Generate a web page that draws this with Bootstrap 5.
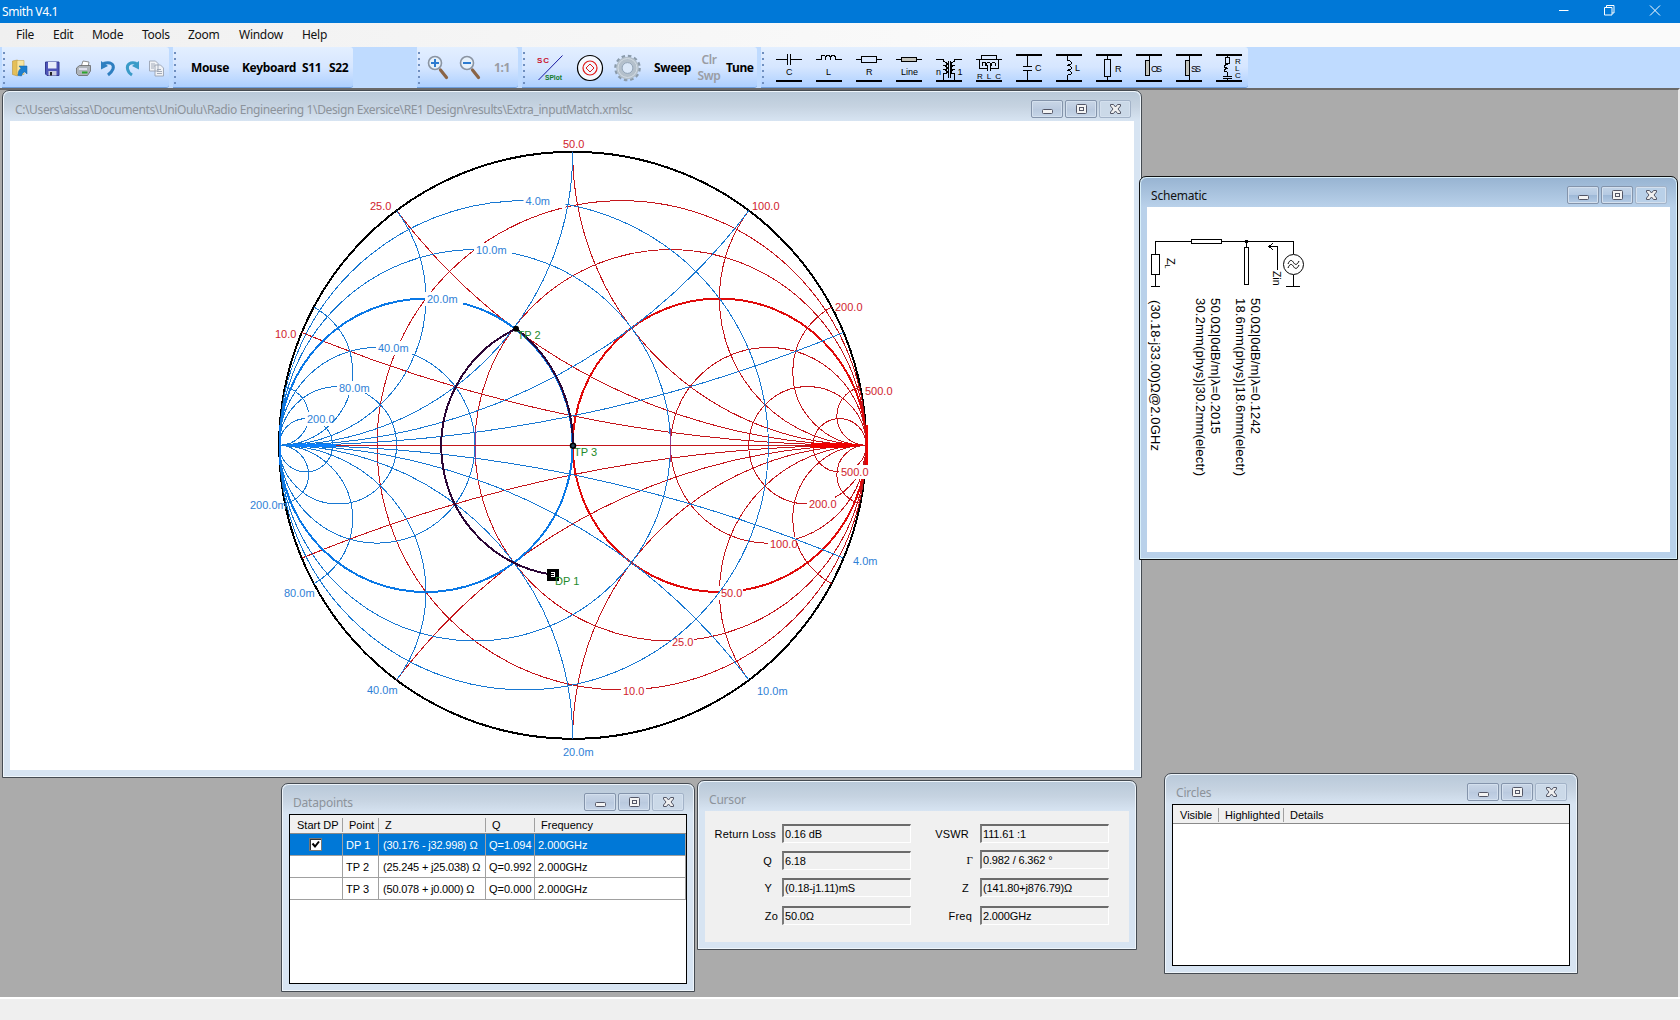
<!DOCTYPE html>
<html lang="en">
<head>
<meta charset="utf-8">
<title>Smith V4.1</title>
<link href="https://cdn.jsdelivr.net/npm/bootstrap@5.3.0/dist/css/bootstrap.min.css" rel="stylesheet">
<style>
:root{--ui:"Noto Sans","Open Sans",sans-serif;--ar:"Liberation Sans",Arial,sans-serif}
body{font-family:var(--ui);font-size:12px;line-height:16px;color:#000;width:1680px;height:1020px;overflow:hidden;background:#efefef}
svg{display:block;flex:none}
.app-title{height:23px;background:#0078d7;color:#fff;padding-left:2px}
.app-title .caption{font-size:12px;letter-spacing:-.4px}
.app-menu{height:24px;background:linear-gradient(90deg,#f0f0f0,#fafafa 60%);padding-left:16px}
.app-menu a{color:#111;text-decoration:none;letter-spacing:-.28px;white-space:nowrap}
.tools{height:41px;background:#bfdbff;padding-left:2px}
.strip{height:41px;padding-top:2px;background:linear-gradient(#e3efff,#d6e6ff 50%,#add0ff);border-bottom:1px solid #6f9fdc;border-radius:0 3px 3px 0;position:relative}
.strip::before{content:"";width:2px;height:33px;margin-left:1px;flex:none;background:repeating-linear-gradient(#6f8fc0 0 2px,transparent 2px 6px)}
.strip b{font-weight:700;letter-spacing:-.35px;white-space:nowrap;line-height:16px}
.dim{color:#9a9ca3}
.desk{height:909px;background:#ababab;border-top:2px solid #696969;border-right:2px solid #e8e8e8;position:relative}
.status-line{height:2px;background:#fff}
.mdi{position:absolute;border:1px solid #454b52;border-radius:7px 7px 0 0;background:#d7e4f2;box-shadow:inset 0 0 0 1px #eef5fb;padding:0 7px 7px}
.mdi .bar{height:29px;margin:1px -6px 0;padding:8px 9px 0 5px;background:linear-gradient(#b9c9d9,#c6d3e1 50%,#d7e4f2);border-radius:6px 6px 0 0}
.mdi .bar span{color:#8c939b;letter-spacing:-.2px;line-height:18px;white-space:nowrap;padding-top:1px}
.mdi.active{background:#b9d1ea;border-color:#111;box-shadow:inset 0 0 0 1px #d9f0fa}
.mdi.active .bar{background:linear-gradient(#98b4d2,#b9d1ea);padding-right:8px}
.mdi.active .bar span{color:#111}
.wb{width:32px;height:18px;border:1px solid #8494ab;border-radius:2px;background:linear-gradient(#c9d6e6,#bccbe0 50%,#b9c9de 50%,#c6d5e8);box-shadow:inset 0 0 0 1px #d4e0ee;padding:0;display:flex;align-items:center;justify-content:center}
.wb:last-child{border-color:#a3b3c8;background:#cbd9e8}
.active .wb{background:linear-gradient(#c3d4e8,#b4c9e2 50%,#9db8d6 50%,#b5cce6)}
.active .wb:last-child{background:#b9d0e8}
.pane{background:#fff;flex:1;min-height:0}
.boxed{border:1px solid #000}
.grid{font-family:var(--ar);font-size:11px;line-height:14px}
.grid th,.grid td{font-weight:400;padding:0;white-space:nowrap;border-right:1px solid #a0a0a0;border-bottom:1px solid #a0a0a0}
.grid th{background:#f0f0f0;height:19px;padding:2px 0 0 6px;border-right:0;border-bottom-color:#8a8a8a;position:relative}
.grid th:first-child{padding-left:7px}
.grid th+th::before{content:"";position:absolute;left:-1px;top:3px;bottom:1px;width:1px;background:#a0a0a0}
.grid td{height:22px;padding-left:3px}
.grid td:nth-child(3){padding-left:4px;letter-spacing:-.18px}
.grid .sel td{background:#0078d7;color:#fff}
.tick{width:13px;height:13px;background:#fff;border:1px solid #777;box-shadow:inset 1px 1px 0 #333;margin-left:16px}
.form-lines{background:#f0f0f0;font-family:var(--ar);font-size:11px;line-height:14px}
.fld{height:19px;border:1px solid #fff;border-top:2px solid #6b6b6b;border-left:2px solid #7a7a7a;width:129px;margin-right:1px;padding:1px 0 0 1px;font-size:11px;line-height:15px;letter-spacing:-.15px}
.lb{letter-spacing:.2px;text-align:right}
text{font-family:var(--ar)}
.chart text{font-size:11px}
</style>
</head>
<body>
<header class="app-title d-flex align-items-center justify-content-between">
  <span class="caption">Smith V4.1</span>
  <svg width="121" height="23" fill="none" stroke="#fff"><path d="M0 10.500h9.500M45.500 7.500h7.500v7.500h-7.500zM47.500 7V5.500h7.500v7.500h-2M91 5.500l10 10M101 5.500l-10 10"/></svg>
</header>
<nav class="app-menu d-flex align-items-center">
  <a href="#" style="width:37px">File</a><a href="#" style="width:39px">Edit</a><a href="#" style="width:50px">Mode</a><a href="#" style="width:46px">Tools</a><a href="#" style="width:51px">Zoom</a><a href="#" style="width:63px">Window</a><a href="#">Help</a>
</nav>
<section class="tools d-flex">
  <div class="strip d-flex align-items-center me-1" style="width:167px">
    <svg width="160" height="40" viewBox="5 47 160 40">
      <path d="M12.500 60l5-1v16l-5-1.500z" fill="#e5bf58" stroke="#b8923a" stroke-width=".6"/><path d="M17 59.500h7v14h-7z" fill="#f8e4a0" stroke="#c8a850" stroke-width=".6"/>
      <path d="M18 74.500c0-4 1-6 3-7l-2-2.500h8v8l-2.300-2.300c-1.700 1-2.700 2-3.200 4.300z" fill="#1c7fd0" stroke="#1460a0" stroke-width=".5"/>
      <path d="M45.500 61h13.500v13.500h-12l-1.500-1.500z" fill="#4f55b8" stroke="#343a90"/><path d="M48 61h8.500v6.500H48z" fill="#e8ecfa"/><path d="M48.500 70h8v4.500h-8z" fill="#c8cce0"/><path d="M50 71h2v3.500h-2z" fill="#222"/>
      <path d="M81 66l2-6 6 1-1 5z" fill="#fff" stroke="#777" stroke-width=".8"/><path d="M76.500 67l3-2.500h11V70l-3 4.500h-9l-2-2z" fill="#aeb4ba" stroke="#666" stroke-width=".8"/><path d="M79 68h8" stroke="#eef" stroke-width="1.500"/><path d="M82 71.500h5.500" stroke="#2ca52c" stroke-width="2"/>
      <path d="M103.500 62.500c7-2.500 11 1 9.500 5.500-.7 2-2.500 4-5 6" fill="none" stroke="#2f7fc0" stroke-width="3"/><path d="M101 60v8.500l7-3.500z" fill="#2f7fc0"/>
      <path d="M136.500 62.500c-6-2-10 1-9 5.500.5 2.500 2 4.500 4.500 6" fill="none" stroke="#3a9bc8" stroke-width="3"/><path d="M139 60v8.500l-7-3.500z" fill="#3a9bc8"/>
      <g fill="#f0f2f6" stroke="#9aa3b2" stroke-width=".9"><path d="M149.500 60h6l2.500 2.500V70h-8.500zM155 64h5.500l3 3v8H155z"/><path d="M151 63h4M151 65h4M151 67h3M157 68.500h4M157 70.500h5M157 72.500h5"/></g>
    </svg>
  </div>
  <div class="strip d-flex align-items-center" style="width:180px">
    <b style="margin-left:15px;width:51px">Mouse</b><b style="width:60px">Keyboard</b><b style="width:27px">S11</b><b>S22</b>
  </div>
  <div style="width:64px"></div>
  <div class="strip d-flex align-items-center me-1" style="width:101px">
    <svg width="62" height="40" viewBox="420 47 62 40">
      <g fill="#e6f1fb" stroke="#8a94a2" stroke-width="1.600"><circle cx="435" cy="62" r="6.500"/><circle cx="467" cy="62" r="6.500"/></g>
      <g stroke="#2c7bd0" stroke-width="2"><path d="M431 62h8M435 58v8M463 62h8"/></g>
      <g stroke="#8a6446" stroke-width="3.200" stroke-linecap="round"><path d="M440.500 69l6 7.500M472.500 69l6 7.500"/></g>
    </svg>
    <b class="dim" style="margin-left:12px">1:1</b>
  </div>
  <div class="strip d-flex align-items-center me-1" style="width:235px">
    <svg width="119" height="40" viewBox="525 47 119 40">
      <path d="M538.500 79l24-24.500" stroke="#1818a0"/><text x="537" y="62" font-size="8" font-weight="700" fill="#c8102c" textLength="12">SC</text><text x="545" y="79" font-size="8" font-weight="700" fill="#107a28" textLength="17" lengthAdjust="spacingAndGlyphs">SPlot</text>
      <circle cx="590" cy="67" r="12.500" fill="#f4f8ff" stroke="#000" stroke-width="1.200"/><circle cx="590" cy="67" r="7" fill="none" stroke="#e01818" stroke-width="1.200"/><path d="M590 63l4 4-4 4-4-4z" fill="none" stroke="#e01818"/>
      <circle cx="627.500" cy="67" r="11.800" fill="none" stroke="#8b9bab" stroke-width="3" stroke-dasharray="3.400 2.780"/><circle cx="627.500" cy="67" r="8.500" fill="none" stroke="#b4c0cb" stroke-width="5.500"/><circle cx="627.500" cy="67" r="5.400" fill="#dbe8f8" stroke="#7e8fa0" stroke-width=".8"/><circle cx="627.500" cy="67" r="9.500" fill="none" stroke="#d3dce4"/>
    </svg>
    <b style="margin-left:10px;width:43px">Sweep</b><b class="dim text-center" style="width:24px;font-weight:600">Clr<br>Swp</b><b style="margin-left:5px">Tune</b>
  </div>
  <div class="strip d-flex align-items-center" style="width:487px">
    <svg style="margin-left:1px" width="480" height="40" viewBox="765 47 480 40">
      <g fill="none" stroke="#000" shape-rendering="crispEdges">
      <path stroke-width="2" d="M776 80h26M816 80h26M856 80h26M896 80h26M936 80h26M976 80h26M1016 80h26M1056 80h26M1096 80h26M1136 80h26M1176 80h26M1216 80h26M1016 54h26M1056 54h26M1096 54h26M1136 54h26M1176 54h26M1216 54h26"/>
      <path d="M776 58.500h11M791 58.500h11M787.500 53v11M790.500 53v11M816 58.500h5c0-6 4.500-6 4.500 0c0-6 5-6 5 0c0-6 5-6 5 0h6M856 58.500h5M876 58.500h6M861.500 55.500h15v6h-15z"/>
      <path d="M896 58.500h5M917 58.500h5M1149.500 55v4M1189.500 55v25"/><path fill="#c4c4bc" d="M901.500 56.500h15v4h-15zM1145.500 59.500h4v15h-4zM1185.500 59.500h4v15h-4z"/>
      <path d="M936 58.500h7.500v2c5 1 5 4 0 4c5 1 5 4 0 4c5 1 5 4 0 4v7M962 58.500h-7.500v2c-5 1-5 4 0 4c-5 1-5 4 0 4c-5 1-5 4 0 4v7M948.500 60v17M950.500 60v17"/>
      <path d="M976 58.500h3M999 58.500h3M981.500 54.500h15v4h-15zM979.500 58v9h8M998.500 58v9h-8M979 58.500h2M997 58.500h2M982 65c0-5 4-5 4 0c0-5 5-5 5 0c0-5 5-5 5 0M987.500 64v6M990.500 64v6"/>
      <path d="M1027.500 55v11M1027.500 69v11M1023 65.500h9M1023 69.500h9M1067.500 55v4c5 1 5 5 0 5c5 1 5 5 0 5c5 1 5 5 0 5v6M1107.500 55v3M1107.500 75v5M1104.500 58.500h6v17h-6zM1227.500 55v2M1225.500 56.500h4v6h-4zM1227.500 63c-4 1-4 4 0 4c-4 1-4 4 0 4v4M1223 75.500h9M1223 77.500h9M1227.500 78v2"/>
      </g>
      <g font-size="9"><text x="786" y="74">C</text><text x="826" y="74">L</text><text x="866" y="74">R</text><text x="901" y="74" textLength="17">Line</text><text x="936" y="74">n</text><text x="957.500" y="74">1</text><text x="977" y="78" font-size="8" textLength="24">RLC</text><text x="1035" y="70">C</text><text x="1075" y="70">L</text><text x="1115" y="71">R</text><text x="1151" y="71" textLength="11">OS</text><text x="1191" y="71" textLength="10">SS</text><g font-size="8"><text x="1235" y="63">R</text><text x="1235" y="70">L</text><text x="1235" y="77">C</text></g></g>
    </svg>
  </div>
</section>

<main class="desk">
  <section class="mdi d-flex flex-column" style="left:2px;top:0;width:1140px;height:688px">
    <div class="bar d-flex justify-content-between"><span style="letter-spacing:-.38px;padding-left:6px">C:\Users\aissa\Documents\UniOulu\Radio Engineering 1\Design Exersice\RE1 Design\results\Extra_inputMatch.xmlsc</span><div class="btns d-flex" style="gap:2px"></div></div>
    <div class="pane">
      <svg class="chart" width="1124" height="649" viewBox="10 121 1124 649">
        <defs><clipPath id="disc"><circle cx="572.700" cy="445.300" r="293.500"/></clipPath></defs>
        <circle cx="572.700" cy="445.300" r="293.500" fill="none" stroke="#000" stroke-width="2" shape-rendering="crispEdges"/>
        <g id="zgrid" fill="none" stroke="#c4161c" clip-path="url(#disc)" shape-rendering="crispEdges"></g>
        <g id="zlabels" fill="#d01c2c"></g>
        <g id="ygrid" fill="none" stroke="#1878d2" clip-path="url(#disc)" shape-rendering="crispEdges"></g>
        <g id="ylabels" fill="#2f7fd6"></g>
        <g shape-rendering="crispEdges"><path d="M475.500 428v34M670.500 428v34" stroke="#8a3a90"/><path d="M330 445.500h536" stroke="#c4161c"/><path d="M279.500 425v40" stroke="#0a7cf5" stroke-width="2"/><path d="M866.500 425v40" stroke="#f00000" stroke-width="2"/><path d="M282 445.300l24-2v4zM306 443.500l30 1v2l-30 1z" fill="#0a80ff"/><path d="M864 445.300l-24-3v6zM840 442.500l-29 1v4l29 1z" fill="#f00000"/></g>
        <path d="M552.700 574.700A129.700 129.700 0 0 1 516.300 328.700A146.750 146.750 0 0 1 573 445.500" fill="none" stroke="#2b0636" stroke-width="2" shape-rendering="crispEdges"/>
        <path d="M547 569h12v12h-12z"/><path d="M551 572.500h3.500v4h-3.500M551 574.500h3" stroke="#fff" fill="none" shape-rendering="crispEdges"/>
        <g fill="#1e8a2a"><text x="517.500" y="339">TP 2</text><text x="574" y="456">TP 3</text><text x="555" y="585">DP 1</text></g>
        <circle cx="516" cy="328.700" r="3"/><circle cx="573" cy="445.700" r="2.500" fill="#245" stroke="#000" stroke-width="1.500"/>
      </svg>
    </div>
  </section>

  <section class="mdi d-flex flex-column" style="left:281px;top:693px;width:414px;height:209px">
    <div class="bar d-flex justify-content-between"><span style="padding-left:5px">Datapoints</span><div class="btns d-flex" style="gap:2px"></div></div>
    <div class="pane boxed">
      <table class="grid" style="table-layout:fixed;width:396px;border-collapse:separate;border-spacing:0">
        <colgroup><col style="width:53px"><col style="width:36px"><col style="width:107px"><col style="width:49px"><col></colgroup>
        <tr><th>Start DP</th><th>Point</th><th>Z</th><th>Q</th><th>Frequency</th></tr>
        <tr class="sel"><td><div class="tick"><svg width="11" height="11"><path d="M2.500 4.500l2.500 3 4-5" fill="none" stroke="#000" stroke-width="2"/></svg></div></td><td>DP 1</td><td>(30.176 - j32.998) Ω</td><td>Q=1.094</td><td>2.000GHz</td></tr>
        <tr><td></td><td>TP 2</td><td>(25.245 + j25.038) Ω</td><td>Q=0.992</td><td>2.000GHz</td></tr>
        <tr><td></td><td>TP 3</td><td>(50.078 + j0.000) Ω</td><td>Q=0.000</td><td>2.000GHz</td></tr>
      </table>
    </div>
  </section>

  <section class="mdi d-flex flex-column" style="left:697px;top:690px;width:440px;height:170px">
    <div class="bar d-flex"><span style="padding-left:5px">Cursor</span></div>
    <div class="pane form-lines d-flex" style="padding:13px 19px 0 0">
      <div class="d-flex flex-column" style="width:207px;gap:8px">
        <div class="d-flex justify-content-between align-items-center"><span class="lb" style="width:71px">Return Loss</span><div class="fld">0.16 dB</div></div>
        <div class="d-flex justify-content-between align-items-center"><span class="lb" style="width:67px">Q</span><div class="fld">6.18</div></div>
        <div class="d-flex justify-content-between align-items-center"><span class="lb" style="width:67px">Y</span><div class="fld">(0.18-j1.11)mS</div></div>
        <div class="d-flex justify-content-between align-items-center" style="margin-top:1px"><span class="lb" style="width:73px">Zo</span><div class="fld">50.0Ω</div></div>
      </div>
      <div class="d-flex flex-column" style="width:198px;gap:8px">
        <div class="d-flex justify-content-between align-items-center"><span class="lb" style="width:57px">VSWR</span><div class="fld">111.61 :1</div></div>
        <div class="d-flex justify-content-between align-items-center" style="margin-top:-1px"><span class="lb" style="width:61px;font-family:'Liberation Serif',serif">Γ</span><div class="fld">0.982 / 6.362 °</div></div>
        <div class="d-flex justify-content-between align-items-center" style="margin-top:1px"><span class="lb" style="width:57px">Z</span><div class="fld">(141.80+j876.79)Ω</div></div>
        <div class="d-flex justify-content-between align-items-center" style="margin-top:1px"><span class="lb" style="width:60px">Freq</span><div class="fld">2.000GHz</div></div>
      </div>
    </div>
  </section>

  <section class="mdi d-flex flex-column" style="left:1164px;top:683px;width:414px;height:201px">
    <div class="bar d-flex justify-content-between"><span style="padding-left:5px">Circles</span><div class="btns d-flex" style="gap:2px"></div></div>
    <div class="pane boxed">
      <table class="grid" style="table-layout:fixed;width:396px;border-collapse:separate;border-spacing:0">
        <colgroup><col style="width:46px"><col style="width:65px"><col></colgroup>
        <tr><th>Visible</th><th>Highlighted</th><th>Details</th></tr>
      </table>
    </div>
  </section>

  <section class="mdi active d-flex flex-column" style="left:1139px;top:86px;width:539px;height:384px">
    <div class="bar d-flex justify-content-between"><span style="padding-left:5px">Schematic</span><div class="btns d-flex" style="gap:2px;margin-right:1px"></div></div>
    <div class="pane">
      <svg width="522" height="345" viewBox="1147 207 522 345">
        <g fill="none" stroke="#000" shape-rendering="crispEdges"><path d="M1155.500 254v-12.500h36M1222 241.500h71.500V254M1155.500 275v11.500M1151 286.500h9M1151.500 254.500h8v20h-8zM1191.500 239.500h30v4h-30zM1246.500 241v6M1244.500 247.500h4v37h-4zM1293.500 275v11.500M1286 286.500h14M1277.500 270v-23.500h-8M1273 243l-4 3.500 4 3.500"/></g>
        <path d="M1245 240h3v3h-3z"/>
        <g fill="none" stroke="#000"><circle cx="1293.500" cy="264.500" r="10"/><path d="M1288 264c2-5 4-4 5.500-1.500s3.500 3 5.500-1.500M1288 268c2-5 4-4 5.500-1.500s3.500 3 5.500-1.500"/></g>
        <g font-size="13">
          <text transform="translate(1151 300)rotate(90)" textLength="151">(30.18-j33.00)Ω@2.0GHz</text>
          <text transform="translate(1196 298)rotate(90)" textLength="178">30.2mm(phys)|30.2mm(electr)</text>
          <text transform="translate(1211 298)rotate(90)" textLength="136">50.0Ω|0dB/m|λ=0.2015</text>
          <text transform="translate(1236 298)rotate(90)" textLength="178">18.6mm(phys)|18.6mm(electr)</text>
          <text transform="translate(1251 298)rotate(90)" textLength="136">50.0Ω|0dB/m|λ=0.1242</text>
        </g>
        <text transform="translate(1273 271)rotate(90)" font-size="10.500" textLength="14.500">Zin</text>
        <text transform="translate(1167 258)rotate(90)" font-size="11">Z</text><text transform="translate(1164.500 264.500)rotate(90)" font-size="7">L</text>
      </svg>
    </div>
  </section>
</main>
<div class="status-line"></div>

<script src="https://cdn.jsdelivr.net/npm/bootstrap@5.3.0/dist/js/bootstrap.bundle.min.js"></script>
<script>
// Window buttons shared by every child window
document.querySelectorAll('.btns').forEach(b => {
  const icons = [
    '<rect x="1.500" y="6.500" width="10" height="4" rx="1" fill="#f4f4f4" stroke="#535666"/>',
    '<rect x="1.500" y="1.500" width="10" height="9" rx="1" fill="#f4f4f4" stroke="#535666"/><rect x="4.500" y="4.500" width="4" height="3" fill="none" stroke="#535666"/>',
    '<path d="M1.500 1.500h3l2 2.500 2-2.500h3v1.500l-2.500 3 2.500 3v1.500h-3l-2-2.500-2 2.500h-3v-1.500l2.500-3-2.500-3z" fill="#f0f0f0" stroke="#535666"/>'];
  b.innerHTML = icons.map(i => `<button class="wb"><svg width="13" height="12">${i}</svg></button>`).join('');
});
// Smith chart: constant r/x (impedance) and g/b (admittance) families
const CX = 572.7, CY = 445.3, R = 293.5, vals = [0.2, 0.5, 1, 2, 4, 10];
function family(dir, heavy) {
  let s = '';
  for (const v of vals) {
    const hv = v === 1 ? ` stroke="${heavy}" stroke-width="2"` : '';
    s += `<circle cx="${CX + dir * R * v / (1 + v)}" cy="${CY}" r="${R / (1 + v)}"${hv}/>`;
    for (const k of [-1, 1]) s += `<circle cx="${CX + dir * R}" cy="${CY + k * R / v}" r="${R / v}"/>`;
  }
  return s;
}
zgrid.innerHTML = family(1, '#e00a0a');
ygrid.innerHTML = family(-1, '#0a78e6');
// [text, x, centre y, width of the blank behind it]
const lab = a => a.map(([t, x, y, w]) => (w ? `<rect x="${x - 2}" y="${y - 7}" width="${w}" height="14" fill="#fff"/>` : '') + `<text x="${x}" y="${y + 4}">${t}</text>`).join('');
zlabels.innerHTML = lab([['50.0',563,144],['25.0',370,206],['10.0',275,334],['100.0',752,206],['200.0',835,307],['500.0',865,391],
  ['500.0',841,472,27],['200.0',809,504,28],['100.0',770,544,28],['50.0',721,593,24],['25.0',672,642,24],['10.0',623,691,25]]);
ylabels.innerHTML = lab([['4.0m',525.5,201,42],['10.0m',476,250,38],['20.0m',427,299,38],['40.0m',378,348,36],['80.0m',339,388,28],['200.0',307,419,27],
  ['200.0m',250,505],['80.0m',284,593],['40.0m',367,690],['20.0m',563,752],['10.0m',757,691],['4.0m',853,561]]);
</script>
</body>
</html>
